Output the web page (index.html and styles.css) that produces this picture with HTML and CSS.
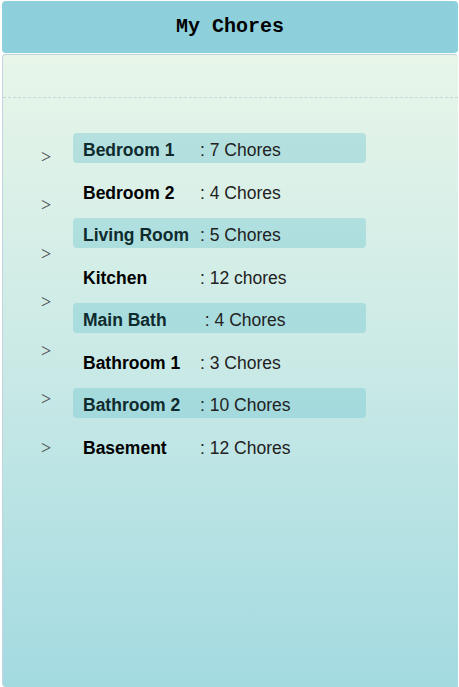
FILE: index.html
```html
<!DOCTYPE html>
<html>
<head>
<meta charset="utf-8">
<link rel="stylesheet" href="styles.css">
</head>
<body>
<div class="app">
  <header class="topbar">My Chores</header>
  <main class="panel">
    <div class="panel-head"></div>
    <div class="panel-body">
      <div class="chevrons">
        <span class="chev">&gt;</span>
        <span class="chev">&gt;</span>
        <span class="chev">&gt;</span>
        <span class="chev">&gt;</span>
        <span class="chev">&gt;</span>
        <span class="chev">&gt;</span>
        <span class="chev">&gt;</span>
      </div>
      <ul class="rooms">
        <li class="room alt"><span class="name">Bedroom 1</span><span class="count">: 7 Chores</span></li>
        <li class="room"><span class="name">Bedroom 2</span><span class="count">: 4 Chores</span></li>
        <li class="room alt"><span class="name">Living Room</span><span class="count">: 5 Chores</span></li>
        <li class="room"><span class="name">Kitchen</span><span class="count">: 12 chores</span></li>
        <li class="room alt mainbath"><span class="name">Main Bath</span><span class="count">&nbsp;: 4 Chores</span></li>
        <li class="room"><span class="name">Bathroom 1</span><span class="count">: 3 Chores</span></li>
        <li class="room alt"><span class="name">Bathroom 2</span><span class="count">: 10 Chores</span></li>
        <li class="room"><span class="name">Basement</span><span class="count">: 12 Chores</span></li>
      </ul>
    </div>
  </main>
</div>
</body>
</html>
```
FILE: styles.css
```css
html, body {
  margin: 0;
  padding: 0;
  background: #ffffff;
  overflow: hidden;
}
body {
  padding: 1px 1px 0 2px;
  height: 687px;
  box-sizing: border-box;
}
.app {
  display: flex;
  flex-direction: column;
  gap: 1px;
  height: 100%;
}
.topbar {
  height: 52px;
  background: #8dd0db;
  border-radius: 4px;
  display: flex;
  align-items: center;
  justify-content: center;
  font-family: "Liberation Mono", "Courier New", monospace;
  font-size: 20px;
  font-weight: bold;
  color: #000;
  padding-bottom: 2px;
  box-sizing: border-box;
}
.panel {
  flex: 1;
  border: 1px solid #c3d3e0;
  border-bottom: none;
  border-right: none;
  border-radius: 4px 4px 0 4px;
  background: linear-gradient(to bottom, #e8f6e9 0%, #c9e9e6 50%, #a3dae1 100%);
  display: flex;
  flex-direction: column;
}
.panel-head {
  height: 42px;
  border-bottom: 1px dashed #c4d8d8;
}
.panel-body {
  display: grid;
  grid-template-columns: 32px 293px;
  padding: 35px 0 0 38px;
}
.chevrons {
  display: flex;
  flex-direction: column;
}
.chev {
  height: 48.5px;
  display: flex;
  align-items: center;
  font-family: "Liberation Serif", "Times New Roman", serif;
  font-size: 18px;
  color: #444;
}
.rooms {
  list-style: none;
  margin: 0;
  padding: 0;
  display: flex;
  flex-direction: column;
  gap: 12.5px;
}
.room {
  height: 30px;
  box-sizing: border-box;
  padding: 8px 0 0 10px;
  line-height: 19px;
  font-family: "Liberation Sans", Arial, sans-serif;
  font-size: 17.5px;
  border-radius: 4px;
  display: flex;
}
.room.alt {
  background: rgba(120, 200, 210, 0.42);
}
.name {
  width: 117px;
  font-weight: bold;
  color: #000;
}
.room.alt .name {
  color: #0f2b2d;
}
.count {
  color: #222;
}
```
